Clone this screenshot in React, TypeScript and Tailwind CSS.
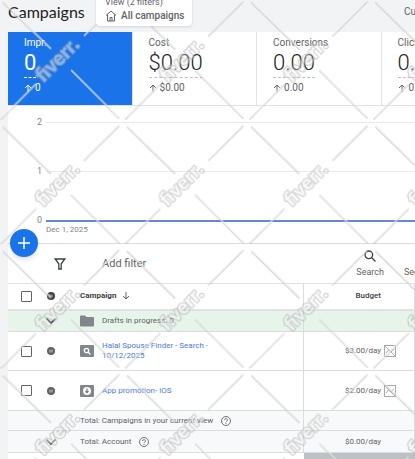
import React from "react";

const metrics = [
  { label: "Impr.", value: "0", delta: "0", active: true },
  { label: "Cost", value: "$0.00", delta: "$0.00", active: false },
  { label: "Conversions", value: "0.00", delta: "0.00", active: false },
  { label: "Clicks", value: "0.00", delta: "0.00", active: false },
];

const ticks = ["2", "1", "0"];

function ArrowUp() {
  return (
    <svg className="h-2 w-2 shrink-0" viewBox="0 0 8 8" fill="none" stroke="currentColor" aria-hidden="true">
      <path d="M4 8V1M1 4l3-3 3 3" />
    </svg>
  );
}

function Paused({ color = "#5f6368" }: { color?: string }) {
  return (
    <svg className="mx-auto block size-2" viewBox="0 0 8 8" aria-label="Paused">
      <circle cx="4" cy="4" r="4" fill={color} />
      <path d="M3 2.5v3M5 2.5v3" stroke="#d4d6d8" strokeWidth=".9" />
    </svg>
  );
}

function SearchCampaign() {
  return (
    <svg className="block h-3 w-3.5" viewBox="0 0 14 12" aria-hidden="true">
      <rect width="14" height="12" rx="1" fill="#80868b" />
      <circle cx="6.5" cy="5.5" r="2.2" fill="none" stroke="#fff" strokeWidth="1.3" />
      <path d="m8 7 2.5 2.5" stroke="#fff" strokeWidth="1.3" />
    </svg>
  );
}

function AppCampaign() {
  return (
    <svg className="block h-3 w-3.5" viewBox="0 0 14 12" aria-hidden="true">
      <rect width="14" height="12" rx="1" fill="#80868b" />
      <circle cx="7" cy="6" r="4" fill="#fff" />
      <path d="M7 3.5v4M5.5 6 7 7.8 8.5 6" fill="none" stroke="#80868b" strokeWidth="1.3" />
    </svg>
  );
}

function BudgetChart() {
  return (
    <svg className="block h-3 w-3 shrink-0" viewBox="0 0 12 12" fill="none" stroke="#a5a9ad" aria-hidden="true">
      <rect x=".5" y=".5" width="11" height="11" />
      <path d="m2 8 2.5-3L7 7l3-3M1 1l10 10" />
    </svg>
  );
}

function Chevron() {
  return (
    <svg className="block h-2 w-3" viewBox="0 0 12 8" fill="none" stroke="#3c4043" strokeWidth="1.6" aria-hidden="true">
      <path d="M1.5 1.5 6 6l4.5-4.5" />
    </svg>
  );
}

function Help() {
  return (
    <svg className="size-[10px] shrink-0" viewBox="0 0 10 10" fill="none" stroke="#5f6368" aria-label="Help">
      <circle cx="5" cy="5" r="4.5" strokeWidth=".9" />
      <path d="M3.6 4a1.4 1.4 0 1 1 2.1 1.2c-.5.3-.7.5-.7 1M5 7v.9" strokeWidth=".9" />
    </svg>
  );
}

function Tick({ label }: { label: string }) {
  return (
    <input
      type="checkbox"
      aria-label={label}
      className="mx-auto block size-[11px] appearance-none rounded-[1px] border border-[#5f6368] bg-white checked:bg-[#1a73e8]"
    />
  );
}

function Watermark() {
  return (
    <svg className="pointer-events-none absolute inset-0 h-full w-full" aria-hidden="true">
      <defs>
        <pattern id="mark" x="-1.5" y="-2.7" width="124.2" height="124.4" patternUnits="userSpaceOnUse">
          <g strokeLinecap="round" fill="none" opacity=".7">
            <path d="M5 5.5 52 51.5M73 73.5l47 47M3 121.5l34-34M86 38.5l34-34" stroke="#b4b4b4" strokeWidth="1.8" />
            <path d="M5 4.8 52 50.8M73 72.8l47 47M3 120.8l34-34M86 37.8l34-34" stroke="#ececec" strokeWidth="1.4" />
          </g>
          <text
            x="59"
            y="69"
            textAnchor="middle"
            transform="rotate(-45 59 63)"
            className="font-['Lato',sans-serif] text-[20px] font-black"
            fill="#f4f4f4"
            stroke="#a6a6a6"
            strokeWidth="2.4"
            strokeLinejoin="round"
            paintOrder="stroke"
            opacity=".5"
          >
            fiverr.
          </text>
        </pattern>
      </defs>
      <rect width="100%" height="100%" fill="url(#mark)" />
    </svg>
  );
}

export default function App() {
  return (
    <div className="relative min-h-screen overflow-hidden bg-[#f1f3f4] pl-2 font-['Roboto',sans-serif] text-[#5f6368]">
      <header className="flex h-8 items-start">
        <h1 className="w-[88px] font-['Lato',sans-serif] text-base leading-6 text-[#202124]">Campaigns</h1>
        <button className="relative z-10 -mt-2 flex h-[34px] w-24 flex-col gap-0.5 rounded-b-sm bg-white pt-1 pl-[9px] text-left shadow">
          <span className="text-[9px] leading-3">View (2 filters)</span>
          <span className="flex items-center gap-1 text-[10px] leading-3 font-medium whitespace-nowrap">
            <svg className="size-3" viewBox="0 0 12 12" fill="none" stroke="#5f6368" aria-hidden="true">
              <path d="M1 5.5 6 1l5 4.5M2.5 4.5V11h7V4.5M5 11V7.5h2V11" />
            </svg>
            All campaigns
          </span>
        </button>
        <span className="ml-auto w-[11px] overflow-hidden pt-1.5 text-[10px] leading-3 whitespace-nowrap">Custom</span>
      </header>

      <main className="bg-white">
        <section className="flex overflow-hidden border-b border-[#e0e2e4]" aria-label="Metrics">
          {metrics.map((m) => (
            <button
              key={m.label}
              className={
                "flex h-[73px] w-[30.6%] shrink-0 flex-col items-start border-r pt-[5px] pl-4 text-left " +
                (m.active ? "border-[#e0e2e4] bg-[#1a73e8] text-white" : "border-[#e0e2e4]")
              }
            >
              <span className="text-[10px] leading-3">{m.label}</span>
              <span
                className={
                  "border-b border-dashed text-[22px] leading-7 " +
                  (m.active ? "border-white" : "border-[#bdc1c6] font-light text-[#202124]")
                }
              >
                {m.value}
              </span>
              <span className="flex items-center gap-[3px] pt-1 text-[10px] leading-3">
                <ArrowUp />
                {m.delta}
              </span>
            </button>
          ))}
        </section>

        <section className="relative h-[138px] border-b border-[#dadce0] pt-2.5" aria-label="Impressions chart">
          {ticks.map((t) => (
            <div key={t} className="flex h-[49px] items-start">
              <span className="w-[38px] pr-1 text-right text-[9px] leading-3 text-[#80868b]">{t}</span>
              <span
                className={
                  "mt-1.5 flex-1 " + (t === "0" ? "border-t-2 border-[#6487d8]" : "border-t border-[#e8eaed]")
                }
              />
            </div>
          ))}
          <span className="absolute bottom-[7px] left-[38px] text-[8px] leading-3 text-[#80868b]">Dec 1, 2025</span>
          <button
            aria-label="Create campaign"
            className="absolute -bottom-3.5 left-0.5 flex size-7 items-center justify-center rounded-full bg-[#1a73e8] shadow-md"
          >
            <svg className="size-3" viewBox="0 0 12 12" stroke="#fff" strokeWidth="1.5" aria-hidden="true">
              <path d="M6 0v12M0 6h12" />
            </svg>
          </button>
        </section>

        <section className="flex h-[39px] items-center pl-[46px]" aria-label="Toolbar">
          <svg className="h-3 w-3" viewBox="0 0 12 12" fill="none" stroke="#3c4043" strokeWidth="1.3" aria-hidden="true">
            <path d="M1.2 1h9.6L7.2 5.8V11H4.8V5.8z" />
          </svg>
          <button className="ml-9 text-[11px] leading-4">Add filter</button>
          <button className="ml-auto flex flex-col items-center text-[9px] leading-3">
            <svg className="mb-1 size-3" viewBox="0 0 12 12" fill="none" stroke="#3c4043" strokeWidth="1.3" aria-hidden="true">
              <circle cx="4.8" cy="4.8" r="3.8" />
              <path d="m7.5 7.5 4 4" />
            </svg>
            Search
          </button>
          <button className="ml-5 w-[11px] overflow-hidden pt-4 text-left text-[9px] leading-3 whitespace-nowrap">Segment</button>
        </section>

        <table className="w-full table-fixed border-collapse text-[8px] leading-[10px]">
          <colgroup>
            <col className="w-[37px]" />
            <col className="w-[12px]" />
            <col className="w-[23px]" />
            <col className="w-[22px]" />
            <col />
            <col className="w-[111px]" />
          </colgroup>
          <thead>
            <tr className="h-[26px] border-t border-b-2 border-[#e0e2e4] text-[#3c4043]">
              <th><Tick label="Select all campaigns" /></th>
              <th><Paused color="#3c4043" /></th>
              <th />
              <th colSpan={2} className="text-left font-bold">
                <button className="flex items-center gap-1.5">
                  Campaign
                  <svg className="size-2" viewBox="0 0 8 8" fill="none" stroke="#5f6368" aria-hidden="true">
                    <path d="M4 0v7M1 4l3 3 3-3" />
                  </svg>
                </button>
              </th>
              <th className="border-x border-[#dadce0] pr-[33px] text-right font-medium">Budget</th>
            </tr>
          </thead>
          <tbody>
            <tr className="h-[22px] border-b border-[#dadce0] bg-[#e6f4ea]">
              <td />
              <td colSpan={2}><Chevron /></td>
              <td>
                <svg className="block h-3 w-3.5" viewBox="0 0 14 12" fill="#80868b" aria-hidden="true">
                  <path d="M1 .5h4L6.5 2H13a1 1 0 0 1 1 1v7.500a1 1 0 0 1-1 1H1a1 1 0 0 1-1-1v-9a1 1 0 0 1 1-1z" />
                </svg>
              </td>
              <td className="whitespace-nowrap">Drafts in progress: 0</td>
              <td className="border-x border-[#d3e0d8]" />
            </tr>
            <tr className="h-[39px] border-b border-[#dadce0]">
              <td><Tick label="Select Halal Spouse Finder" /></td>
              <td><Paused /></td>
              <td />
              <td><SearchCampaign /></td>
              <td>
                <a href="#halal" className="block w-[120px] text-[#4c78e0]">Halal Spouse Finder - Search - 10/12/2025</a>
              </td>
              <td className="border-x border-[#dadce0] pr-[18px]">
                <span className="flex items-center justify-end gap-[3px]">$3.00/day <BudgetChart /></span>
              </td>
            </tr>
            <tr className="h-10 border-b border-[#dadce0]">
              <td><Tick label="Select App promotion" /></td>
              <td><Paused /></td>
              <td />
              <td><AppCampaign /></td>
              <td><a href="#app" className="text-[#4c78e0]">App promotion- iOS</a></td>
              <td className="border-x border-[#dadce0] pr-[18px]">
                <span className="flex items-center justify-end gap-[3px]">$2.00/day <BudgetChart /></span>
              </td>
            </tr>
            <tr className="h-5 border-b border-[#dadce0] bg-[#f8f9fa]">
              <td colSpan={3} />
              <td colSpan={2}>
                <span className="flex items-center gap-2 whitespace-nowrap">Total: Campaigns in your current view <Help /></span>
              </td>
              <td className="border-x border-[#dadce0]" />
            </tr>
            <tr className="h-[22px] border-b border-[#dadce0] bg-[#f8f9fa]">
              <td />
              <td colSpan={2}><Chevron /></td>
              <td colSpan={2}>
                <span className="flex items-center gap-2">Total: Account <Help /></span>
              </td>
              <td className="border-x border-[#dadce0] pr-[33px] text-right">$0.00/day</td>
            </tr>
          </tbody>
        </table>
        <div className="flex h-1.5 justify-end">
          <div className="w-[111px] bg-[#bdc1c6]" />
        </div>
      </main>
      <Watermark />
    </div>
  );
}
